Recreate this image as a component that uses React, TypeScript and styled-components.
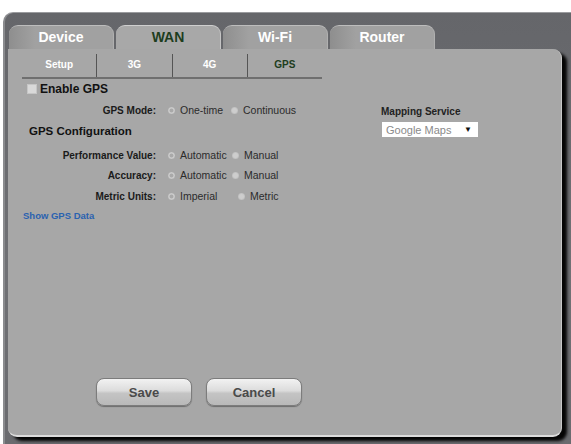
import React from 'react';
import styled, {createGlobalStyle} from 'styled-components';

const Global = createGlobalStyle`
  html, body { margin: 0; padding: 0; background: #fff; }
  body { font-family: "Liberation Sans", Arial, sans-serif; }
`

const Page = styled.div`
  width: 571px;
  height: 444px;
  padding: 12px 0 0 3px;
  box-sizing: border-box;
  overflow: hidden;
`

const Frame = styled.div`
  height: 432px;
  box-sizing: border-box;
  padding: 12px 0 0 3px;
  background: linear-gradient(#65666a, #707175 60%, #6a6b6f);
  border-top: 1px solid #9a9b9e;
  border-left: 2px solid #8a8b8e;
  border-top-left-radius: 10px;
  display: flex;
  flex-direction: column;
`

const Tabs = styled.div`
  display: flex;
  gap: 2px;
  padding-left: 1px;
  height: 24px;
`

const Tab = styled.div<{active?: boolean}>`
  width: 105px;
  box-sizing: border-box;
  border-radius: 9px 9px 0 0;
  border-top: 1px solid ${p => p.active ? '#cfcfcf' : '#bdbdbd'};
  border-right: 1px solid ${p => p.active ? '#c4c4c4' : '#b0b0b0'};
  background: ${p => p.active ? '#a8a8a8' : 'linear-gradient(90deg, #8e8e8e, #a1a1a1 25%, #a1a1a1)'};
  color: ${p => p.active ? '#1d3d1d' : '#fff'};
  font-size: 14px;
  font-weight: bold;
  text-align: center;
  line-height: 23px;
`

const Panel = styled.div`
  width: 554px;
  height: 388px;
  box-sizing: border-box;
  background: #a7a7a7;
  border-radius: 0 9px 9px 9px;
  border-right: 1px solid #c8c8c8;
  border-bottom: 2px solid #dcdcdc;
  box-shadow: 5px 4px 3px #050505;
  padding: 5px 0 0 14px;
  display: flex;
  flex-direction: column;
`

const SubTabs = styled.div`
  display: flex;
  width: 300px;
  border-bottom: 2px solid #6f6f6f;
`

const SubTab = styled.div<{active?: boolean}>`
  width: 75px;
  height: 23px;
  line-height: 22px;
  text-align: center;
  font-size: 10px;
  font-weight: bold;
  color: ${p => p.active ? '#1d3d1d' : '#fff'};
  & + & { border-left: 1px solid #555; }
`

const Body = styled.div`
  display: flex;
`

const Left = styled.div`
  width: 359px;
`

const Right = styled.div`
  padding-top: 27px;
`

const CheckRow = styled.label`
  display: flex;
  align-items: center;
  margin: 2px 0 0 5px;
  height: 16px;
  font-size: 12px;
  font-weight: bold;
  color: #111;
`

const Box = styled.span`
  width: 8px;
  height: 8px;
  background: #d9d9d9;
  border: 1px solid #c6c6c6;
  margin-right: 3px;
`

const Row = styled.div<{top: number}>`
  display: flex;
  align-items: center;
  height: 14px;
  margin-top: ${p => p.top}px;
`

const Label = styled.span`
  width: 134px;
  text-align: right;
  font-size: 10px;
  font-weight: bold;
  color: #1a1a1a;
  margin-right: 12px;
`

const Option = styled.span<{w?: number}>`
  display: flex;
  align-items: center;
  min-width: ${p => p.w || 0}px;
  font-size: 10.5px;
  color: #2b2b2b;
`

const Radio = styled.span<{checked?: boolean}>`
  width: 7px;
  height: 7px;
  border-radius: 50%;
  margin-right: 5px;
  background: ${p => p.checked
    ? 'radial-gradient(circle, #a9a9a9 0 1.5px, #d2d2d2 2.5px, #bdbdbd 3.5px)'
    : 'radial-gradient(circle, #cdcdcd 0 2px, #bebebe 3.5px)'};
`

const Heading = styled.div`
  margin: 8px 0 0 7px;
  height: 14px;
  font-size: 11.5px;
  font-weight: bold;
  color: #111;
`

const Link = styled.a`
  display: block;
  margin: 7px 0 0 1px;
  font-size: 9.5px;
  font-weight: bold;
  color: #2a62b0;
  text-decoration: none;
`

const SideTitle = styled.div`
  font-size: 10px;
  font-weight: bold;
  color: #222;
  height: 13px;
`

const Select = styled.div`
  margin: 3px 0 0 1px;
  width: 96px;
  height: 15px;
  box-sizing: border-box;
  background: #fff;
  display: flex;
  align-items: center;
  justify-content: space-between;
  padding: 0 6px 0 4px;
  font-size: 11px;
  color: #8a8a8a;
  span { color: #111; font-size: 8px; }
`

const Buttons = styled.div`
  display: flex;
  gap: 14px;
  margin-top: auto;
  margin-bottom: 29px;
  padding-left: 74px;
`

const Button = styled.button`
  width: 96px;
  height: 28px;
  border-radius: 8px;
  border: 1px solid #7c7c7c;
  background: linear-gradient(#f2f2f2, #dcdcdc 45%, #c4c4c4 55%, #b9b9b9);
  box-shadow: 0 1px 1px rgba(0,0,0,0.35);
  font-family: "Liberation Sans", Arial, sans-serif;
  font-size: 13px;
  font-weight: bold;
  color: #4a4a4a;
  padding: 0;
`

const App: React.FC = () => {
  return (
    <Page>
      <Global/>
      <Frame>
        <Tabs>
          <Tab>Device</Tab>
          <Tab active>WAN</Tab>
          <Tab>Wi-Fi</Tab>
          <Tab>Router</Tab>
        </Tabs>
        <Panel>
          <SubTabs>
            <SubTab>Setup</SubTab>
            <SubTab>3G</SubTab>
            <SubTab>4G</SubTab>
            <SubTab active>GPS</SubTab>
          </SubTabs>
          <Body>
            <Left>
              <CheckRow><Box/>Enable GPS</CheckRow>
              <Row top={6}>
                <Label>GPS Mode:</Label>
                <Option w={63}><Radio checked/>One-time</Option>
                <Option><Radio/>Continuous</Option>
              </Row>
              <Heading>GPS Configuration</Heading>
              <Row top={9}>
                <Label>Performance Value:</Label>
                <Option w={64}><Radio checked/>Automatic</Option>
                <Option><Radio/>Manual</Option>
              </Row>
              <Row top={6}>
                <Label>Accuracy:</Label>
                <Option w={64}><Radio checked/>Automatic</Option>
                <Option><Radio/>Manual</Option>
              </Row>
              <Row top={7}>
                <Label>Metric Units:</Label>
                <Option w={70}><Radio checked/>Imperial</Option>
                <Option><Radio/>Metric</Option>
              </Row>
              <Link>Show GPS Data</Link>
            </Left>
            <Right>
              <SideTitle>Mapping Service</SideTitle>
              <Select>Google Maps<span>▼</span></Select>
            </Right>
          </Body>
          <Buttons>
            <Button>Save</Button>
            <Button>Cancel</Button>
          </Buttons>
        </Panel>
      </Frame>
    </Page>
  )
}

export default App
